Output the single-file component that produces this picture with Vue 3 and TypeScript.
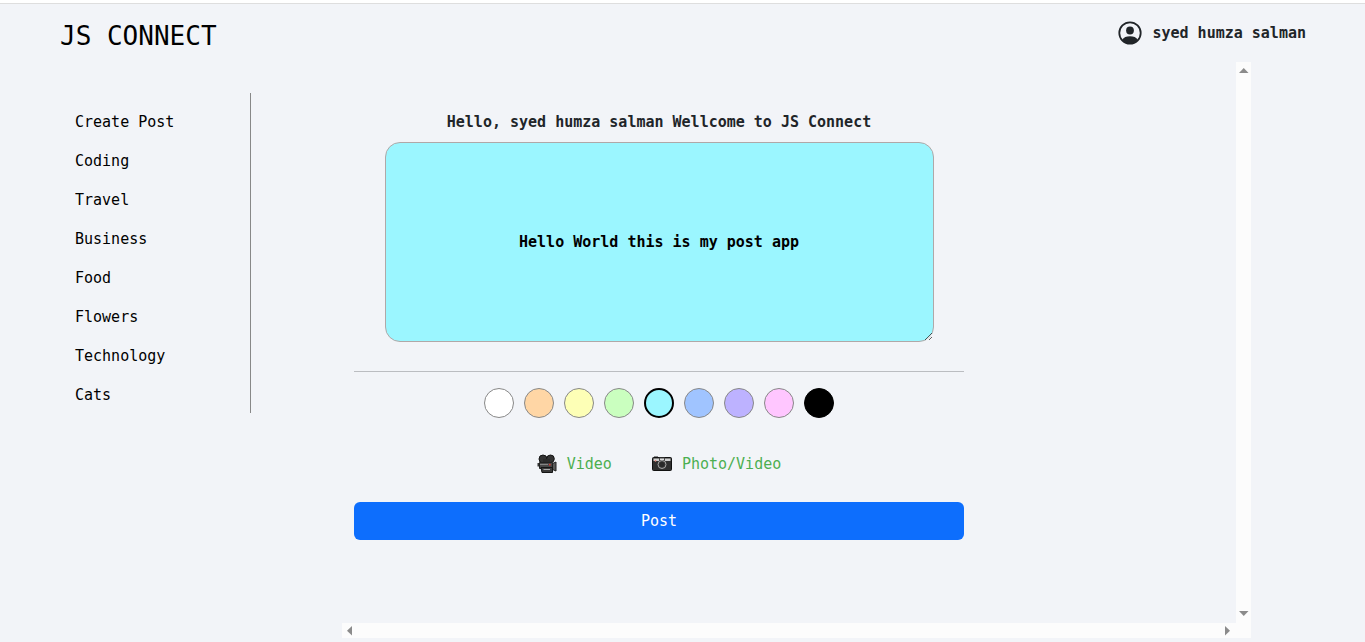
<script setup lang="ts">
import { ref } from 'vue'

const userName = 'syed humza salman'
const topics: string[] = ['Create Post', 'Coding', 'Travel', 'Business', 'Food', 'Flowers', 'Technology', 'Cats']

interface Swatch {
  name: string
  value: string
}

const swatches: Swatch[] = [
  { name: 'White', value: '#ffffff' },
  { name: 'Orange', value: '#ffd6a5' },
  { name: 'Yellow', value: '#fdffb6' },
  { name: 'Green', value: '#caffbf' },
  { name: 'Cyan', value: '#9bf6ff' },
  { name: 'Blue', value: '#a0c4ff' },
  { name: 'Violet', value: '#bdb2ff' },
  { name: 'Pink', value: '#ffc6ff' },
  { name: 'Black', value: '#000000' },
]

const color = ref('#9bf6ff')
const message = ref('Hello World this is my post app')
</script>

<template>
  <div class="page">
    <header class="header">
      <a class="brand" href="#">JS CONNECT</a>
      <div class="user">
        <svg class="avatar" viewBox="0 0 24 24" aria-hidden="true">
          <circle cx="12" cy="12" r="10.7" fill="none" stroke="currentColor" stroke-width="1.8" />
          <circle cx="12" cy="9.5" r="3.9" fill="currentColor" />
          <path d="M4.3 18.800C5.500 16.200 8.500 15.200 12 15.200s6.500 1 7.700 3.600C18 21.500 15 23 12 23S6 21.500 4.300 18.800Z" fill="currentColor" />
        </svg>
        <span>{{ userName }}</span>
      </div>
    </header>

    <div class="body">
      <nav class="side">
        <ul class="topics">
          <li v-for="topic in topics" :key="topic"><a href="#">{{ topic }}</a></li>
        </ul>
      </nav>

      <div class="scroller">
        <main class="content">
          <form class="composer" @submit.prevent>
            <label class="greeting" for="message">Hello, {{ userName }} Wellcome to JS Connect</label>
            <textarea id="message" v-model="message" class="message" :style="{ backgroundColor: color }"></textarea>
            <hr class="rule" />
            <div class="swatches" role="radiogroup" aria-label="Background colour">
              <input
                v-for="s in swatches"
                :key="s.value"
                v-model="color"
                class="swatch"
                type="radio"
                name="color"
                :value="s.value"
                :aria-label="s.name"
                :style="{ backgroundColor: s.value }"
              />
            </div>
            <div class="attachments">
              <button class="attach" type="button">
                <svg class="emoji" viewBox="0 0 20 20" aria-hidden="true">
                  <circle cx="6" cy="5" r="4" fill="#333" stroke="#151515" />
                  <circle cx="13.500" cy="4.800" r="3.800" fill="#333" stroke="#151515" />
                  <path d="M6 5h7v4H6z" fill="#2b2b2b" />
                  <path d="M0.500 9h2.500v3.500H0.500z" fill="#333" />
                  <path d="M2.500 8.500h13v6h-13z" fill="#484848" stroke="#222" />
                  <path d="M3 10.500h8" stroke="#858585" />
                  <path d="M15.500 9.500l3.500-1.500v9l-3.500-1.500z" fill="#5a5a5a" stroke="#222" />
                  <path d="M4 13.500h11.500v5H5z" fill="#3a3a3a" stroke="#151515" />
                  <path d="M6.500 15.500h6.500" stroke="#aaa" />
                  <circle cx="12.800" cy="10.700" r="0.900" fill="#e03a35" />
                </svg>
                <span>Video</span>
              </button>
              <button class="attach" type="button">
                <svg class="emoji" viewBox="0 0 20 20" aria-hidden="true">
                  <path d="M2 2.500h4v2H2z" fill="#222" />
                  <rect x="0.500" y="3.500" width="19" height="13" rx="1" fill="#303030" stroke="#111" />
                  <path d="M1.500 4.500h17V7h-17z" fill="#cfcfcf" />
                  <path d="M7 3.500h6V7H7z" fill="#444" />
                  <path d="M8 4.500h4v1.500H8z" fill="#ddd" />
                  <circle cx="3.500" cy="6.800" r="0.900" fill="#e58a80" />
                  <circle cx="10" cy="10.500" r="4" fill="#3a3a3a" stroke="#a8a8a8" />
                  <circle cx="10" cy="10.500" r="2.500" fill="#292929" />
                </svg>
                <span>Photo/Video</span>
              </button>
            </div>
            <button class="submit" type="submit">Post</button>
          </form>
        </main>
        <div class="bar bar-y" aria-hidden="true">
          <svg class="arrow" viewBox="0 0 15 15"><path d="M3 11h9.500L7.750 6z" /></svg>
          <svg class="arrow" viewBox="0 0 15 15"><path d="M3 3h9.500L7.750 8z" /></svg>
        </div>
        <div class="bar bar-x" aria-hidden="true">
          <svg class="arrow" viewBox="0 0 15 15"><path d="M10 3v9.500L5 7.750z" /></svg>
          <svg class="arrow" viewBox="0 0 15 15"><path d="M4 3v9.500l5-4.750z" /></svg>
        </div>
        <div class="corner"></div>
      </div>
    </div>
  </div>
</template>

<style>
body {
  background: #f2f4f8;
}
</style>

<style scoped>
.page {
  box-sizing: border-box;
  min-height: 100vh;
  display: flex;
  flex-direction: column;
  border-top: 3px solid #fff;
  padding-bottom: 4px;
  background: #f2f4f8;
  color: #212529;
  font-family: "DejaVu Sans Mono", "Liberation Mono", monospace;
  font-size: 15px;
  line-height: 24px;
}
.page a {
  color: #000;
  text-decoration: none;
}
.header {
  box-sizing: border-box;
  height: 59px;
  display: flex;
  justify-content: space-between;
  align-items: flex-start;
  padding: 16px 59px 0 60px;
  border-top: 1px solid #dedede;
}
.brand {
  font-size: 26px;
  line-height: 32px;
}
.user {
  display: flex;
  align-items: center;
  gap: 10px;
  padding-top: 1px;
  font-weight: 700;
}
.avatar {
  width: 24px;
  height: 24px;
}
.body {
  flex: 1;
  display: grid;
  grid-template-columns: 3fr 8fr 1fr;
  padding-left: 1px;
}
.side {
  padding: 31px 91px 0 59px;
}
.topics {
  display: flex;
  flex-direction: column;
  gap: 15px;
  margin: 0;
  padding: 17px 0 6px 15px;
  list-style: none;
  border-right: 1px solid #888;
}
.scroller {
  display: grid;
  grid-template-columns: 1fr 15px;
  grid-template-rows: 1fr 15px;
}
.content {
  padding: 48px 12px 24px;
}
.composer {
  max-width: 610px;
  display: flex;
  flex-direction: column;
}
.greeting {
  align-self: center;
  font-weight: 700;
}
.message {
  box-sizing: border-box;
  align-self: center;
  width: 90%;
  height: 200px;
  margin-top: 8px;
  padding: 87px 12px 0;
  border: 1px solid #b0a8a8;
  border-radius: 15px;
  color: #000;
  font: inherit;
  font-weight: 700;
  text-align: center;
  overflow: hidden;
  resize: both;
}
.rule {
  width: 100%;
  margin: 29px 0 16px;
  border: 0;
  border-top: 1px solid #bbbdc1;
}
.swatches {
  display: flex;
  justify-content: center;
  gap: 10px;
}
.swatch {
  box-sizing: border-box;
  appearance: none;
  width: 30px;
  height: 30px;
  margin: 0;
  border: 1px solid #888;
  border-radius: 50%;
}
.swatch:checked {
  border: 2px solid #000;
}
.swatch:last-child {
  border-color: #000;
}
.attachments {
  display: flex;
  justify-content: center;
  gap: 40px;
  margin: 34px 0 26px;
}
.attach {
  display: flex;
  align-items: center;
  gap: 10px;
  padding: 0;
  border: 0;
  background: none;
  color: #4caf50;
  font: inherit;
}
.emoji {
  width: 20px;
  height: 20px;
}
.submit {
  padding: 7px 12px;
  border: 0;
  border-radius: 6px;
  background: #0d6efd;
  color: #fff;
  font: inherit;
}
.bar {
  display: flex;
  justify-content: space-between;
  background: #fcfcfc;
}
.bar-y {
  flex-direction: column;
}
.corner {
  background: #fcfcfc;
}
.arrow {
  width: 15px;
  height: 15px;
  fill: #8b8b8b;
}
</style>
